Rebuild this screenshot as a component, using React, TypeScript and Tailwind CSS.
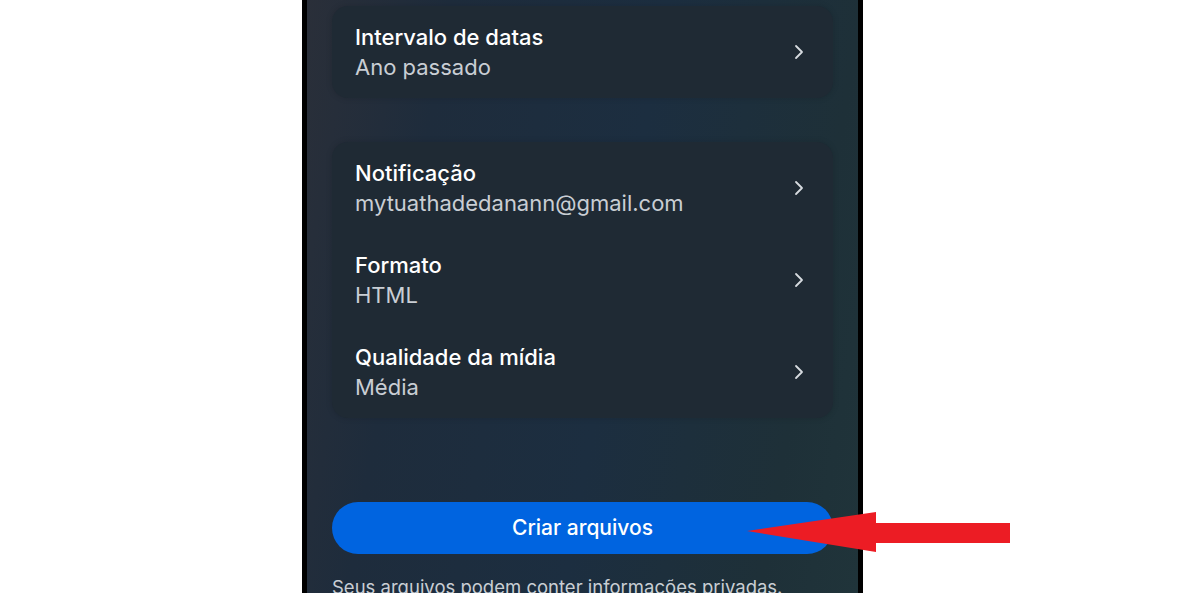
import { ChevronRight } from "lucide-react";

type Row = { title: string; value: string };

const dateRows: Row[] = [{ title: "Intervalo de datas", value: "Ano passado" }];

const settingRows: Row[] = [
  { title: "Notificação", value: "mytuathadedanann@gmail.com" },
  { title: "Formato", value: "HTML" },
  { title: "Qualidade da mídia", value: "Média" },
];

function SettingRow({ row }: { row: Row }) {
  return (
    <button className="flex h-[92px] w-full items-center justify-between pl-[23px] pr-[22px] text-left">
      <div className="flex flex-col">
        <span className="text-[22px] leading-[30px] font-medium text-white">{row.title}</span>
        <span className="text-[22px] leading-[31px] text-[#c9ced4]">{row.value}</span>
      </div>
      <ChevronRight className="h-6 w-6 text-[#d7dbe0]" strokeWidth={1.8} />
    </button>
  );
}

function Card({ rows }: { rows: Row[] }) {
  return (
    <div className="shrink-0 rounded-2xl bg-[#1f2a34] shadow-[0_0_6px_rgba(0,0,0,0.15)]">
      {rows.map((r) => (
        <SettingRow key={r.title} row={r} />
      ))}
    </div>
  );
}

export default function App() {
  return (
    <div
      className="relative flex h-[600px] w-[1200px] bg-white pl-[302px]"
      style={{ fontFamily: "Inter, 'Noto Sans', sans-serif" }}
    >
      {/* Phone screen */}
      <div className="flex h-[593px] w-[561px] flex-col overflow-hidden border-x-[5px] border-black bg-[linear-gradient(100deg,#2a2f39_0%,#1e2c3c_22%,#1c2e40_55%,#1e3038_85%,#20343a_100%)] px-[25px] pt-[6px]">
        <Card rows={dateRows} />
        <div className="mt-[44px] shrink-0">
          <Card rows={settingRows} />
        </div>
        <button className="mt-[84px] h-[52px] w-full shrink-0 rounded-full bg-[#0064e0] text-[21px] font-medium text-white">
          Criar arquivos
        </button>
        <p className="mt-[20px] shrink-0 whitespace-nowrap text-[18.5px] leading-[26px] text-[#c9ced4]">
          Seus arquivos podem conter informações privadas.
        </p>
      </div>

      {/* Red arrow pointing at the button */}
      <svg
        className="absolute left-[740px] top-[505px]"
        width="280"
        height="55"
        viewBox="0 0 280 55"
      >
        <polygon
          points="7,26 136,7 136,18 270,18 270,38 136,38 136,47"
          fill="#ec1c24"
        />
      </svg>
    </div>
  );
}
